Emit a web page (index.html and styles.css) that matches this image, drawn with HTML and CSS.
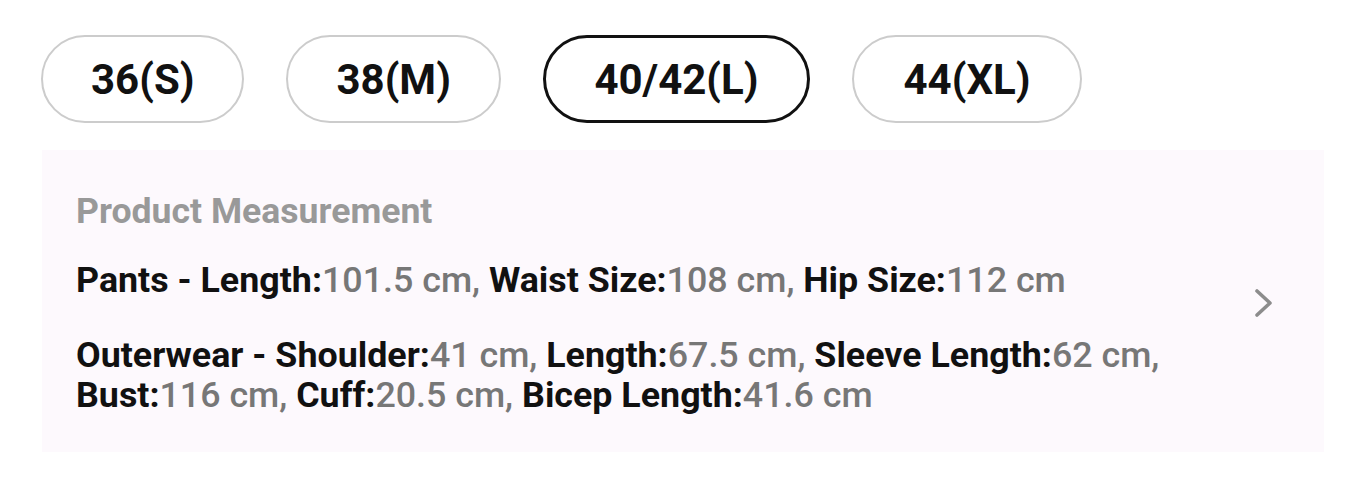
FILE: index.html
```html
<!DOCTYPE html>
<html lang="en">
<head>
<meta charset="utf-8">
<title>Size</title>
<link rel="stylesheet" href="styles.css">
</head>
<body>
<div class="page">
  <div class="sizes">
    <div class="pill">36(S)</div>
    <div class="pill">38(M)</div>
    <div class="pill selected">40/42(L)</div>
    <div class="pill wide">44(XL)</div>
  </div>
  <div class="panel">
    <div class="content">
      <div class="title">Product Measurement</div>
      <p class="line"><b>Pants - Length:</b><span>101.5 cm, </span><b>Waist Size:</b><span>108 cm, </span><b>Hip Size:</b><span>112 cm</span></p>
      <p class="line two"><b>Outerwear - Shoulder:</b><span>41 cm, </span><b>Length:</b><span>67.5 cm, </span><b>Sleeve Length:</b><span>62 cm,</span><br><b>Bust:</b><span>116 cm, </span><b>Cuff:</b><span>20.5 cm, </span><b>Bicep Length:</b><span>41.6 cm</span></p>
    </div>
    <div class="arrow">
      <svg width="20" height="30" viewBox="0 0 20 30"><path d="M3 3 L16 15 L3 27" fill="none" stroke="#8c8c8c" stroke-width="3.6" stroke-linecap="round" stroke-linejoin="round"/></svg>
    </div>
  </div>
</div>
</body>
</html>
```
FILE: styles.css
```css
html, body {
  margin: 0;
  padding: 0;
  background: #ffffff;
}
body {
  font-family: Roboto, "Liberation Sans", sans-serif;
}
.page {
  padding: 35px 42px 0 41px;
  width: 1283px;
}
.sizes {
  display: flex;
  gap: 42px;
}
.pill {
  box-sizing: border-box;
  height: 88px;
  padding: 0 48px;
  border: 2px solid #cccccc;
  border-radius: 44px;
  display: flex;
  align-items: center;
  justify-content: center;
  font-size: 42px;
  font-weight: 700;
  color: #111111;
}
.pill.selected {
  border: 3px solid #111111;
  padding: 0 48.5px;
}
.pill.wide {
  padding: 0 49.5px;
}
.panel {
  margin-top: 27px;
  margin-left: 1px;
  background: #fdf9fd;
  display: flex;
  align-items: center;
  height: 302px;
  box-sizing: border-box;
  padding: 4px 50px 0 34px;
}
.content {
  flex: 1;
}
.title {
  font-size: 35.6px;
  font-weight: 700;
  color: #999999;
  line-height: 40px;
}
.line {
  margin: 29px 0 0 0;
  font-size: 35.8px;
  line-height: 40px;
}
.line.two {
  margin-top: 35px;
}
.line b {
  font-weight: 700;
  color: #111111;
}
.line span {
  font-weight: 500;
  color: #777777;
}
.arrow {
  width: 20px;
  display: flex;
  align-items: center;
}
```
